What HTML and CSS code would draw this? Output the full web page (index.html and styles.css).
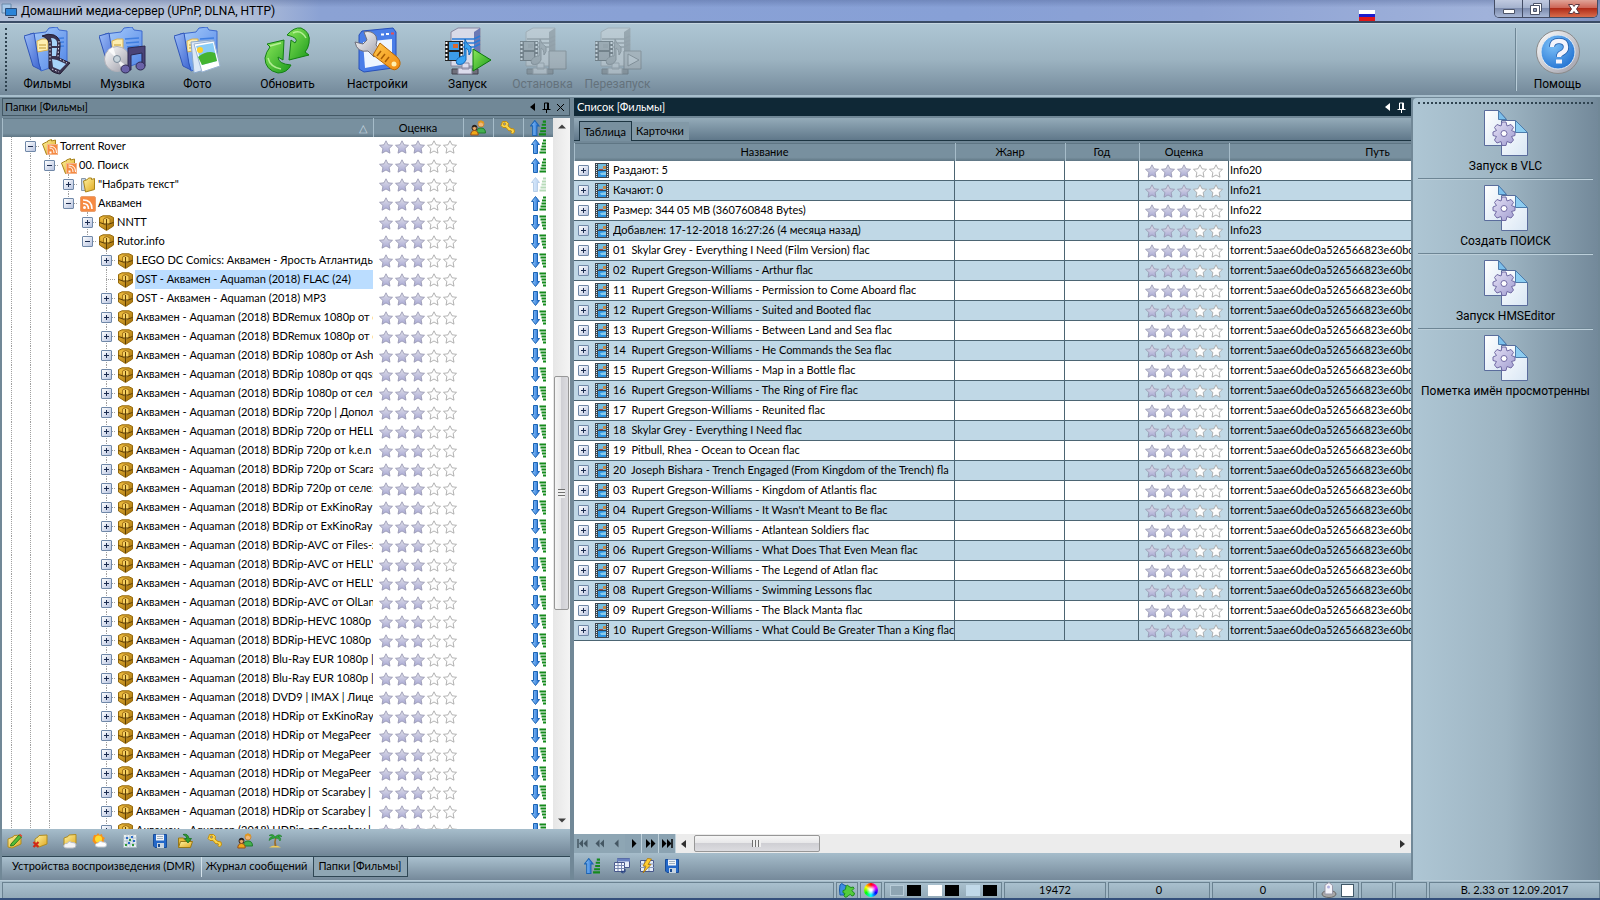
FILE: index.html
```html
<!DOCTYPE html>
<html lang="ru">
<head>
    <meta charset="UTF-8">
    <meta name="viewport" content="width=device-width, initial-scale=1.0">
    <title>Домашний медиа-сервер (UPnP, DLNA, HTTP)</title>
    <link rel="stylesheet" href="styles.css">
</head>
<body>
    <svg class="sprite" aria-hidden="true">
        <defs>
            <linearGradient id="g-folder" x1="0" y1="0" x2="1" y2="1"><stop offset="0" stop-color="#a9cdfb"/><stop offset="1" stop-color="#4f84e6"/></linearGradient>
            <linearGradient id="g-front" x1="0" y1="0" x2="1" y2="1"><stop offset="0" stop-color="#9dbef8"/><stop offset="1" stop-color="#3a62cf"/></linearGradient>
            <linearGradient id="g-green" x1="0" y1="0" x2="1" y2="1"><stop offset="0" stop-color="#8be85a"/><stop offset="1" stop-color="#1c9a1c"/></linearGradient>
            <linearGradient id="g-blue" x1="0" y1="0" x2="1" y2="0"><stop offset="0" stop-color="#9bd0ff"/><stop offset="1" stop-color="#1766d0"/></linearGradient>
            <linearGradient id="g-orange" x1="0" y1="0" x2="1" y2="1"><stop offset="0" stop-color="#ffc84a"/><stop offset="1" stop-color="#f08a10"/></linearGradient>
            <linearGradient id="g-silver" x1="0" y1="0" x2="1" y2="1"><stop offset="0" stop-color="#ffffff"/><stop offset="1" stop-color="#9a9aa6"/></linearGradient>
            <linearGradient id="g-star" x1="0" y1="0" x2="0" y2="1"><stop offset="0" stop-color="#e2e2ea"/><stop offset="1" stop-color="#a8a8d4"/></linearGradient>
            <linearGradient id="g-gear" x1="0" y1="0" x2="1" y2="1"><stop offset="0" stop-color="#e6e2f6"/><stop offset="1" stop-color="#a09cd0"/></linearGradient>
            <linearGradient id="g-page" x1="0" y1="0" x2="1" y2="1"><stop offset="0" stop-color="#ffffff"/><stop offset="1" stop-color="#d8e6f4"/></linearGradient>
            <linearGradient id="g-yellow" x1="0" y1="0" x2="1" y2="1"><stop offset="0" stop-color="#fff3a0"/><stop offset="1" stop-color="#e0a820"/></linearGradient>
            <linearGradient id="g-gold" x1="0" y1="0" x2="1" y2="1"><stop offset="0" stop-color="#f0bc3c"/><stop offset="1" stop-color="#9c6a08"/></linearGradient>
            <radialGradient id="g-help" cx=".35" cy=".3" r=".8"><stop offset="0" stop-color="#7cc0f8"/><stop offset="1" stop-color="#1f6fd0"/></radialGradient>
        </defs>

        <symbol id="folder" viewBox="0 0 48 48">
            <path d="M6 7l16-2 3-4 8-1 2 3 8 1v31l-26 9z" fill="url(#g-folder)" stroke="#3c68cc"/>
            <path d="M13 14l5-2 6 0v11l-11 2z" fill="#fdeeb0" stroke="#d8b050"/>
            <path d="M15 18h7M15 21h7" stroke="#c09830"/>
            <path d="M26 12l14-1M27 16l13-1M28 20l12-1" stroke="#3f7ee0" stroke-width="1.5"/>
            <path d="M0 9l10-3 5 31 2 6-8-4z" fill="url(#g-front)" stroke="#2f55b8"/>
        </symbol>
        <symbol id="films" viewBox="0 0 48 48">
            <use href="#folder"/>
            <path d="M18 9q6-3 12-1 7 3 6 12l-1 11 11 5-10 11q-8-1-11-6V16q-1-5-7-7z" fill="#3a3450" stroke="#241e34"/>
            <path d="M27 11q5 0 6 4v4h-5v-4zM28 21h5l-1 8h-4zM28 32l5 1 9 4-6 6-7-3z" fill="#a7d4fa"/>
            <path d="M26 15v20M35 14l-1 16M36 32l7 4M28 42l7 3" stroke="#e8e4f4" stroke-dasharray="1.5 2"/>
        </symbol>
        <symbol id="music" viewBox="0 0 48 48">
            <use href="#folder"/>
            <circle cx="18" cy="32" r="12.5" fill="url(#g-silver)" stroke="#b0b0b8"/>
            <path d="M18 32L9 23l5-3zM18 32l10 7-4 5z" fill="#fff" opacity=".8"/>
            <circle cx="18" cy="32" r="3.5" fill="#c8d4dc" stroke="#788898"/>
            <path d="M29 21l17-2v20h-3V26l-11 2v15h-3z" fill="#4a4478" stroke="#2c2850"/>
            <ellipse cx="26.500" cy="42" rx="4.500" ry="4" fill="#6a62a8" stroke="#2c2850"/>
            <ellipse cx="41.500" cy="39" rx="4.500" ry="4" fill="#6a62a8" stroke="#2c2850"/>
        </symbol>
        <symbol id="photo" viewBox="0 0 48 48">
            <use href="#folder"/>
            <path d="M17 15l22-2-2 28-17 5z" fill="#dce8f6" stroke="#8aa8cc"/>
            <path d="M20 17l20-3 6 25-18 6z" fill="#fff" stroke="#9ab4d4"/>
            <path d="M22 19l17-3 4 18-15 4z" fill="#8accf6"/>
            <path d="M24 30q9-7 17-4l2 8-15 4z" fill="#44b430"/>
            <circle cx="26" cy="23" r="3" fill="#ffd028"/>
        </symbol>
        <symbol id="refresh" viewBox="0 0 48 48">
            <path d="M3 17l17-4-1 20-5-3q0 7 13 8-4 8-13 8Q1 43 1 31q1-6 5-11z" fill="url(#g-green)" stroke="#138013" stroke-linejoin="round"/>
            <path d="M25 33l2-20 4 3q5-5-8-8 7-8 14-7 10 4 8 15-1 6-4 9l4 3z" fill="url(#g-green)" stroke="#138013" stroke-linejoin="round"/>
            <path d="M6 19l11-3M4 31q2 9 13 11M29 6q8-4 13 5" fill="none" stroke="#c8f8a8" stroke-width="1.5" opacity=".8"/>
        </symbol>
        <symbol id="settings" viewBox="0 0 48 48">
            <path d="M5 8l3-4 31-3 3 4v33l-3 3-29 4-5-3z" fill="#4a7ee8" stroke="#2850b8"/>
            <path d="M9 15l29-3v24L11 41z" fill="#eef6ff"/>
            <path d="M27 7.500h3M32 7h3" stroke="#fff" stroke-width="2"/><path d="M37 6.500h3" stroke="#e85050" stroke-width="2"/>
            <path d="M1 15l8 2 4-4-3-8q8-2 12 4 2 5 0 9l5 6-7 6-6-6Q3 26 1 15z" fill="url(#g-silver)" stroke="#70707c"/>
            <path d="M26 16l17 14q5 5 2 10-4 5-9 1L19 28z" fill="url(#g-orange)" stroke="#b86808"/>
            <path d="M27 24l-4 5M31 27l-4 5M35 30l-4 5" stroke="#a85c04" stroke-width="1.500"/><circle cx="40" cy="37" r="2.500" fill="#fff0b0"/>
        </symbol>
        <symbol id="server" viewBox="0 0 48 48">
            <path d="M7 5l7-4h22v33l-5 5H7z" fill="#d8dae8" stroke="#8888a0"/>
            <path d="M30 5l6-4v33l-6 5z" fill="#6a78b4"/>
            <path d="M8 12h22l6-3M8 16h22l6-3M8 20h22l6-3" fill="none" stroke="#2a7cd8" stroke-width="1.500"/>
            <path d="M8 42h26v5H8z" fill="#70707c" stroke="#40404c"/><path d="M14 41h14v6H14zM18 36h7v6h-7z" fill="#dcdcec" stroke="#8888a0"/>
            <path d="M1 14h18v20H1z" fill="#222"/>
            <path d="M2.500 15v18M17.500 15v18" stroke="#fff" stroke-width="2" stroke-dasharray="2 2"/>
            <path d="M5 15h10v8H5zM5 25h10v8H5z" fill="#3c9ce8"/>
            <path d="M9 17h5v4H9z" fill="#d86830"/>
            <path d="M21 12q1 5 6 8 1 5-2 8 0-6-3-7v12q-3 6-9 4-3-5 5-8h2z" fill="#38a4f4" stroke="#1468b8"/>
        </symbol>
        <symbol id="start" viewBox="0 0 48 48">
            <use href="#server"/>
            <path d="M29 22l18 11-18 11z" fill="url(#g-green)" stroke="#0c780c" stroke-linejoin="round"/>
        </symbol>
        <symbol id="stop" viewBox="0 0 48 48">
            <use href="#server"/><path d="M30 24h17v18H30z" fill="#b0b0b0" stroke="#555"/>
        </symbol>
        <symbol id="restart" viewBox="0 0 48 48">
            <use href="#server"/><path d="M30 24h17v18H30z" fill="#b0b0b0" stroke="#555"/><path d="M34 27l11 6-11 6z" fill="#ddd" stroke="#555"/>
        </symbol>
        <symbol id="help" viewBox="0 0 48 48">
            <circle cx="24" cy="25" r="21.500" fill="url(#g-silver)" stroke="#8a8a8a"/>
            <circle cx="24" cy="25" r="17" fill="url(#g-help)" stroke="#e4ecf4"/>
            <path d="M18 20q0-6 7-6t7 6q0 4-4 6-3 1-3 4" fill="none" stroke="#1c58a8" stroke-width="6"/>
            <path d="M18 20q0-6 7-6t7 6q0 4-4 6-3 1-3 4" fill="none" stroke="#f4f4fc" stroke-width="4.500"/>
            <path d="M22 32.500h6v4h-6z" fill="#f4f4fc"/>
        </symbol>
        <symbol id="script" viewBox="0 0 44 46">
            <path d="M.5.500h14l8 9v26H.5z" fill="url(#g-page)" stroke="#5a6c9c"/>
            <path d="M14.500.500v9h8z" fill="#7cc0ec" stroke="#4c7cac"/>
            <path d="M17.500 10.500h14l12 12v23h-26z" fill="url(#g-page)" stroke="#5a6c9c"/>
            <path d="M31.500 10.500v12h12z" fill="#8cccf0" stroke="#4c7cac"/>
            <path d="M18 12l4 0 1 4 4-1.500 2.500 3-2 3 3.500 1.500v3.500l-3.500 1 2 3.500-2.500 3-4-1.500-1 4h-4l-1-4-4 1.500-2.500-3 2-3.500-3.500-1V22l3.500-1.500-2-3 2.500-3 4 1.500z" fill="url(#g-gear)" stroke="#716aa4"/>
            <circle cx="20" cy="23.500" r="3" fill="#fff" stroke="#716aa4"/>
        </symbol>

        <symbol id="app" viewBox="0 0 16 16">
            <path d="M1 1h9v9H1z" fill="#a8c8e8" stroke="#6888a8"/><path d="M4.500 5.500h11v7h-11z" fill="#2c84d8" stroke="#2a4c78"/><path d="M7 14.500h6" stroke="#445"/>
        </symbol>
        <symbol id="star" viewBox="0 0 14 14">
            <path d="M7 .8l2 4 4.500.5-3.400 3.200.9 4.700L7 11l-4 2.200.9-4.700L.5 5.300 5 4.800z" fill="url(#g-star)" stroke="#9494ae" stroke-width=".8"/>
        </symbol>
        <symbol id="star-empty" viewBox="0 0 14 14">
            <path d="M7 .8l2 4 4.500.5-3.400 3.200.9 4.700L7 11l-4 2.200.9-4.700L.5 5.300 5 4.800z" fill="#fdfdfd" stroke="#a0a0a0" stroke-width=".8"/>
        </symbol>
        <symbol id="sort-up" viewBox="0 0 15 15">
            <path d="M4.500.5l4 5H6.500v9h-4v-9H.5z" fill="url(#g-blue)" stroke="#1c64b4"/>
            <path d="M12 1.500h3M11 4.500h4M10.500 7.500H15M9.500 10.500H15M8.500 13.500H15" stroke="#148a1c" stroke-width="2"/>
        </symbol>
        <symbol id="sort-down" viewBox="0 0 15 15">
            <path d="M4.500 14.500l4-5H6.500v-9h-4v9H.5z" fill="url(#g-blue)" stroke="#1c64b4"/>
            <path d="M8.500 1.500H15M9.500 4.500H15M10.500 7.500H15M11 10.500h4M12 13.500h3" stroke="#148a1c" stroke-width="2"/>
        </symbol>
        <symbol id="box" viewBox="0 0 16 16">
            <path d="M.5 2.500L4 .8h7l3.500 1.700v8.500L7.500 15.500.5 11z" fill="url(#g-gold)" stroke="#94680c"/>
            <path d="M2 3l3-1v5L2 6z" fill="#e8b83c"/>
            <path d="M4.500 4L8 2.500l3 1.500v5L8 10.500 4.500 9z" fill="#f6d060" stroke="#a4741c"/>
            <path d="M.5 7.500L5 9h5l4.500-1.500M7.500 4v11" fill="none" stroke="#5c3e04"/>
        </symbol>
        <symbol id="rss" viewBox="0 0 16 16">
            <rect x=".5" y=".5" width="15" height="15" rx="1.500" fill="#f68a42" stroke="#e8a070"/>
            <circle cx="4.500" cy="11.500" r="1.500" fill="#fff"/>
            <path d="M3 7.500q5.500 0 5.500 5.500M3 4q9 0 9 9" fill="none" stroke="#fff" stroke-width="1.600"/>
        </symbol>
        <symbol id="rss-folder" viewBox="0 0 16 16">
            <path d="M.5 5l4-2 1 0V2l4-1.500V2l4-1v11l-9 3.500z" fill="url(#g-yellow)" stroke="#a8841c"/>
            <rect x="5.500" y="5.500" width="10" height="10" fill="#f68a42" stroke="#f4b48a"/>
            <path d="M7.500 9q4.500 0 4.500 5M7.500 7q7 0 7 7" fill="none" stroke="#fff"/><path d="M7.500 12.500h2v2h-2z" fill="#fff"/>
        </symbol>
        <symbol id="search-folder" viewBox="0 0 16 16">
            <path d="M1.500 1.500h4v12h-4z" fill="#c4d4e8" stroke="#8898a8"/>
            <path d="M3.500 4l4-1.500 1-1.500 3 0v1.500l3-1v11l-9 2.500z" fill="url(#g-yellow)" stroke="#a8841c"/>
        </symbol>
        <symbol id="film" viewBox="0 0 14 15">
            <path d="M0 0h14v15H0z" fill="#3c4650"/>
            <path d="M1.500 1v14M12.500 1v14" stroke="#e4ecf0" stroke-dasharray="1 1"/>
            <path d="M3 1h8v6H3z" fill="#74bcdc"/><path d="M3 8h8v6H3z" fill="#2c94e0"/>
            <path d="M8 3h3v3H8z" fill="#c88a48"/><path d="M4 6h4v1H4z" fill="#b04848"/><path d="M5 10l6-1v3H6z" fill="#88ccec"/>
        </symbol>

        <symbol id="edit-folder" viewBox="0 0 16 16">
            <path d="M1 6l5-2 1-1.500L14 2v9l-9 4-4-1z" fill="url(#g-yellow)" stroke="#b08c20"/><path d="M4 11l8-9 2.500 2-8 8.500L3.500 13z" fill="#54bc38" stroke="#2a7c20"/><path d="M12 2l2.500 2 .8-1.200L13 .8z" fill="#e04838"/>
        </symbol>
        <symbol id="delete-folder" viewBox="0 0 16 16">
            <path d="M3 6l3-2 1-1.500L15 2v9l-8 3-4-1z" fill="url(#g-yellow)" stroke="#b08c20"/><path d="M1.500 9l5 5M6.500 9l-5 5" stroke="#d02818" stroke-width="2.200"/>
        </symbol>
        <symbol id="cloud-folder" viewBox="0 0 16 16">
            <path d="M2 5l4-1.500L7 2l7-.5v9l-8 3-4-1z" fill="url(#g-yellow)" stroke="#b08c20"/><path d="M5 15q-4 0-3-3 1-2 3-1.500 2-3.500 5-1 4-.5 4 2.500t-3 3z" fill="#f4f4f4" stroke="#b8bcc4"/>
        </symbol>
        <symbol id="sun" viewBox="0 0 16 16">
            <path d="M6 0l1.500 2L10 1l.5 2.500L13 5l-1.500 2 1 3L3 11 .5 8 1 5l1-3 2.500 0z" fill="#f89018"/><circle cx="6.500" cy="6" r="3.500" fill="#ffdc30"/><path d="M6 14q-3 0-2.500-2.500Q4.500 9.500 6 10q2-3 4.500-1 4-.5 4 2.500T12 14z" fill="#fff" stroke="#c0c8d0"/>
        </symbol>
        <symbol id="grid" viewBox="0 0 16 16">
            <path d="M1.500 1.500h13v13h-13z" fill="#e8f0f4" stroke="#a8b8c0"/><path d="M5 1v14M8 1v14M11 1v14M1 5h14M1 8h14M1 11h14" stroke="#b4c4d0"/><path d="M4 4h2v2H4zM9 3h2v2H9zM6 9h2v2H6zM11 7h2v2h-2z" fill="#2c6cc8"/><path d="M7 6h2v2H7zM3 11h2v2H3zM10 11h2v2h-2z" fill="#309c38"/>
        </symbol>
        <symbol id="save" viewBox="0 0 16 16">
            <path d="M1.500 1.500h13v13H3l-1.500-1.500z" fill="#2468c8" stroke="#184c98"/><path d="M4 1.500h8v6H4z" fill="#f0f4f8"/><path d="M5 3.500h6M5 5.500h6" stroke="#a0b0c0"/><path d="M5 10h7v5H5z" fill="#c8d4e0"/><path d="M6 11h2v3H6z" fill="#1c4c90"/>
        </symbol>
        <symbol id="open" viewBox="0 0 16 16">
            <path d="M1.500 14V5h5l1 2h6v7z" fill="#e8bc38" stroke="#987818"/><path d="M1.500 14.500l2-6h12l-2 6z" fill="url(#g-yellow)" stroke="#987818"/><path d="M6 1.500q5-1.500 6 4h2.500L11 10 7.500 5.500H10Q9.500 2.500 6 1.500z" fill="#2ca030" stroke="#187020" stroke-width=".8"/>
        </symbol>
        <symbol id="key" viewBox="0 0 16 16">
            <path d="M2.500 1.500h4l2 2-.5 2.500 3 2.500 3 .5.500 3-2 2-1.500-1.500.5-1.500-1.500-.5-1 .5-3-3.500-3 0-2-2z" fill="#fcd648" stroke="#c08c10" stroke-linejoin="round"/><circle cx="4.500" cy="4" r="1.300" fill="#8c9ca4" stroke="#b88410" stroke-width=".6"/>
        </symbol>
        <symbol id="users" viewBox="0 0 16 16">
            <circle cx="11" cy="4" r="3" fill="#f0b878" stroke="#c88838"/><path d="M6.500 13q0-5 4.500-5t4.500 5z" fill="#44b050" stroke="#207c2c"/><path d="M8.500 3q2-3 5 0" stroke="#e09820" stroke-width="2" fill="none"/><circle cx="4.500" cy="8" r="2.500" fill="#e8a868" stroke="#33241c"/><path d="M2.500 7q2-2.500 4 0" stroke="#28201c" stroke-width="2" fill="none"/><path d="M.8 15q0-4.500 3.700-4.500T8.200 15z" fill="#f0a818" stroke="#98501c"/>
        </symbol>
        <symbol id="palm" viewBox="0 0 16 16">
            <path d="M2 14.500q6-4 12 0z" fill="#f0cc58"/><path d="M8 5l1.500 0q-1.500 4 0 8h-2q-1-4 .5-8z" fill="#9c6c28"/><path d="M8 4Q6 0 2 2.500q3 0 3.500 1.500Q2 4 2 7.500 5 5 8 5q4-.5 5 3 2-3.500-2-4.500 2-.5 4 0Q12 0 8 4z" fill="#30a838" stroke="#1c7c28" stroke-width=".6"/>
        </symbol>
        <symbol id="columns" viewBox="0 0 16 16">
            <path d="M3.500.5h12v9h-12z" fill="#e4ecf8" stroke="#48588c"/><path d="M3 2h13" stroke="#6880c0" stroke-width="3"/><path d="M.5 4.500h10v9H.5z" fill="#f4f8ff" stroke="#48588c"/><path d="M.5 7.500h10M.5 10.500h10M4 5v8M7.500 5v8" stroke="#7888b0"/><path d="M11 11v3H7.500M9 12.500L7.500 14 9 15.500" fill="none" stroke="#203c80"/>
        </symbol>
        <symbol id="flash" viewBox="0 0 16 16">
            <path d="M1.500 2.500h13v11h-13z" fill="#e4ecf8" stroke="#48588c"/><path d="M1 6h14M1 9.500h14M5.500 3v10M10 3v10" stroke="#8898b8"/><path d="M8.500.5L4 8h3l-3 7 8-8.500H9L12.500 1z" fill="#ffcc30" stroke="#a87408" stroke-width=".8"/>
        </symbol>
        <symbol id="puzzle" viewBox="0 0 16 16">
            <path d="M1 3q1.500-3 4 0 3 0 2.500 3v7H1q-1-5 0-10z" fill="#3c8ce0" stroke="#1c5ca8"/><path d="M7 4.500q1-3 3 0l2 1q3-1.500 3 1-1 1-2 2 1 2 2.500 2.500 0 3-2.500 3-2-3-3.500-.5Q6 17 5 13.500l1-2q-3 0-2-3 2 0 2.500-1.500z" fill="#54cc3c" stroke="#1c8c1c"/>
        </symbol>
        <symbol id="satellite" viewBox="0 0 16 16">
            <ellipse cx="8" cy="12" rx="7" ry="3.500" fill="#a8a8a8" stroke="#686868"/><path d="M4 12V3l4-2.500 3.500 3V12z" fill="#f4f4fa" stroke="#9898a8"/><circle cx="7.500" cy="5" r="1.500" fill="#b0b0e0"/>
        </symbol>
        <symbol id="pin" viewBox="0 0 9 11"><path d="M2.500 7V1h4v6M5.500 1v6M.5 7.500h8M4.500 8v3" fill="none" stroke="currentColor"/></symbol>
        <symbol id="cross" viewBox="0 0 9 9"><path d="M1 1l7 7M8 1L1 8" stroke="currentColor"/></symbol>
        <symbol id="tri-left" viewBox="0 0 5 8"><path d="M5 0v8L0 4z" fill="currentColor"/></symbol>
        <symbol id="tri-right" viewBox="0 0 5 8"><path d="M0 0v8l5-4z" fill="currentColor"/></symbol>
        <symbol id="tri-up" viewBox="0 0 8 5"><path d="M0 4.500h8L4 .5z" fill="currentColor"/></symbol>
        <symbol id="tri-down" viewBox="0 0 8 5"><path d="M0 .5h8L4 4.500z" fill="currentColor"/></symbol>
        <symbol id="nav-first" viewBox="0 0 11 9"><path d="M1 0v9" stroke="currentColor" stroke-width="1.500"/><path d="M6 .5v8l-4-4zM10.500.5v8l-4-4z" fill="currentColor"/></symbol>
        <symbol id="nav-back" viewBox="0 0 11 9"><path d="M5.500.5v8l-4-4zM10 .5v8l-4-4z" fill="currentColor"/></symbol>
        <symbol id="nav-prev" viewBox="0 0 11 9"><path d="M7.500.5v8l-4-4z" fill="currentColor"/></symbol>
        <symbol id="nav-next" viewBox="0 0 11 9"><path d="M4 0v9l4.500-4.500z" fill="currentColor"/></symbol>
        <symbol id="nav-forward" viewBox="0 0 11 9"><path d="M1 0v9l4.500-4.500zM6 0v9l4.500-4.500z" fill="currentColor"/></symbol>
        <symbol id="nav-last" viewBox="0 0 11 9"><path d="M10 0v9" stroke="currentColor" stroke-width="1.500"/><path d="M0 0v9l4.500-4.500zM5 0v9l4.500-4.500z" fill="currentColor"/></symbol>
        <symbol id="minimize" viewBox="0 0 14 14"><path d="M1.500 7.500h11v4h-11z" fill="#fff" stroke="#4c5468"/></symbol>
        <symbol id="restore" viewBox="0 0 14 14"><path d="M4.500 1.500h8v8h-8z" fill="#fff" stroke="#4c5468"/><path d="M1.500 3.500h9v9h-9z" fill="#fff" stroke="#4c5468"/><path d="M4.500 6.500h3v3h-3z" fill="#8c98b4" stroke="#4c5468"/></symbol>
        <symbol id="close" viewBox="0 0 14 14"><path d="M1.500 2.500h4L7 4.500l1.500-2h4L9.500 7l3 4.500h-4L7 9.500l-1.500 2h-4l3-4.500z" fill="#fff" stroke="#5c3840"/></symbol>
    </svg>

    <header class="title-bar">
        <svg class="icon"><use href="#app"/></svg>
        <h1>Домашний медиа-сервер (UPnP, DLNA, HTTP)</h1>
        <span class="flag"></span>
        <div class="window-buttons">
            <button aria-label="Свернуть"><svg><use href="#minimize"/></svg></button>
            <button class="restore" aria-label="Восстановить"><svg><use href="#restore"/></svg></button>
            <button class="close" aria-label="Закрыть"><svg><use href="#close"/></svg></button>
        </div>
    </header>

    <nav class="toolbar">
        <div class="group">
            <button><svg><use href="#films"/></svg>Фильмы</button>
            <button><svg><use href="#music"/></svg>Музыка</button>
            <button><svg><use href="#photo"/></svg>Фото</button>
        </div>
        <button><svg><use href="#refresh"/></svg>Обновить</button>
        <button><svg><use href="#settings"/></svg>Настройки</button>
        <div class="group">
            <button><svg><use href="#start"/></svg>Запуск</button>
            <button disabled><svg><use href="#stop"/></svg>Остановка</button>
            <button disabled><svg><use href="#restart"/></svg>Перезапуск</button>
        </div>
        <div class="help"><button><svg><use href="#help"/></svg>Помощь</button></div>
    </nav>

    <main class="workspace">
        <section class="folders">
            <div class="panel-title">
                <h2>Папки [Фильмы]</h2>
                <button aria-label="Назад"><svg class="tri"><use href="#tri-left"/></svg></button>
                <button aria-label="Закрепить"><svg class="pin"><use href="#pin"/></svg></button>
                <button aria-label="Закрыть"><svg class="cross"><use href="#cross"/></svg></button>
            </div>
            <div class="tree">
                <div class="tree-view">
                    <table class="tree-table">
                        <colgroup><col><col class="w-rate"><col class="w-mark"><col class="w-mark"><col class="w-mark"></colgroup>
                        <thead>
                            <tr>
                                <th aria-label="Название"><span class="sort-mark">△</span></th>
                                <th>Оценка</th>
                                <th aria-label="Пользователи"><svg class="icon"><use href="#users"/></svg></th>
                                <th aria-label="Доступ"><svg class="icon"><use href="#key"/></svg></th>
                                <th aria-label="Сортировка"><svg class="icon"><use href="#sort-up"/></svg></th>
                            </tr>
                        </thead>
                        <tbody id="tree-rows"></tbody>
                    </table>
                </div>
                <div class="scroll-v">
                    <svg class="tri-v"><use href="#tri-up"/></svg>
                    <div class="track-v"><span class="space-top"></span><span class="thumb-v"><i></i></span><span class="space-bottom"></span></div>
                    <svg class="tri-v"><use href="#tri-down"/></svg>
                </div>
            </div>
            <div class="small-tools">
                <div class="group">
                    <button aria-label="Изменить папку"><svg class="icon"><use href="#edit-folder"/></svg></button>
                    <button aria-label="Удалить папку"><svg class="icon"><use href="#delete-folder"/></svg></button>
                </div>
                <button aria-label="Скрыть папку"><svg class="icon"><use href="#cloud-folder"/></svg></button>
                <button aria-label="Погода"><svg class="icon"><use href="#sun"/></svg></button>
                <button aria-label="Сетка"><svg class="icon"><use href="#grid"/></svg></button>
                <div class="group">
                    <button aria-label="Сохранить"><svg class="icon"><use href="#save"/></svg></button>
                    <button aria-label="Загрузить"><svg class="icon"><use href="#open"/></svg></button>
                </div>
                <button aria-label="Доступ"><svg class="icon"><use href="#key"/></svg></button>
                <button aria-label="Пользователи"><svg class="icon"><use href="#users"/></svg></button>
                <button aria-label="Остров"><svg class="icon"><use href="#palm"/></svg></button>
            </div>
            <div class="bottom-tabs">
                <button>Устройства воспроизведения (DMR)</button>
                <button>Журнал сообщений</button>
                <button class="active">Папки [Фильмы]</button>
            </div>
        </section>

        <section class="list">
            <div class="panel-title dark">
                <h2>Список [Фильмы]</h2>
                <button aria-label="Назад"><svg class="tri"><use href="#tri-left"/></svg></button>
                <button aria-label="Закрепить"><svg class="pin"><use href="#pin"/></svg></button>
            </div>
            <div class="view-tabs">
                <button class="active">Таблица</button>
                <button>Карточки</button>
            </div>
            <div class="grid-view">
                <table class="grid-table">
                    <colgroup><col><col class="w-genre"><col class="w-year"><col class="w-score"><col class="w-path"></colgroup>
                    <thead>
                        <tr><th>Название</th><th>Жанр</th><th>Год</th><th>Оценка</th><th>Путь</th></tr>
                    </thead>
                    <tbody id="list-rows"></tbody>
                </table>
            </div>
            <div class="scroll-h">
                <div class="navigator">
                    <button disabled aria-label="Первая"><svg><use href="#nav-first"/></svg></button>
                    <button disabled aria-label="Страница назад"><svg><use href="#nav-back"/></svg></button>
                    <button disabled aria-label="Предыдущая"><svg><use href="#nav-prev"/></svg></button>
                    <button aria-label="Следующая"><svg><use href="#nav-next"/></svg></button>
                    <button aria-label="Страница вперёд"><svg><use href="#nav-forward"/></svg></button>
                    <button aria-label="Последняя"><svg><use href="#nav-last"/></svg></button>
                </div>
                <svg class="tri"><use href="#tri-left"/></svg>
                <div class="track-h"><span class="thumb-h"><i></i></span></div>
                <svg class="tri"><use href="#tri-right"/></svg>
            </div>
            <div class="small-tools list-tools">
                <button aria-label="Сортировка"><svg class="icon"><use href="#sort-up"/></svg></button>
                <div class="group">
                    <button aria-label="Столбцы"><svg class="icon"><use href="#columns"/></svg></button>
                    <button aria-label="Обновить"><svg class="icon"><use href="#flash"/></svg></button>
                    <button aria-label="Сохранить"><svg class="icon"><use href="#save"/></svg></button>
                </div>
            </div>
        </section>

        <aside class="scripts">
            <button><svg><use href="#script"/></svg>Запуск в VLC</button>
            <button><svg><use href="#script"/></svg>Создать ПОИСК</button>
            <button><svg><use href="#script"/></svg>Запуск HMSEditor</button>
            <button><svg><use href="#script"/></svg>Пометка имён просмотренны</button>
        </aside>
    </main>

    <footer class="status-bar">
        <span class="cell message"></span>
        <span class="cell tiny"><svg class="icon"><use href="#puzzle"/></svg></span>
        <span class="cell tiny"><i class="wheel"></i></span>
        <span class="cell swatches"><i class="grey"></i><i class="black"></i><i class="white"></i><i class="black"></i><i class="blue"></i><i class="black"></i></span>
        <span class="cell number">19472</span>
        <span class="cell number">0</span>
        <span class="cell number">0</span>
        <span class="cell device"><svg class="icon"><use href="#satellite"/></svg><input type="checkbox" aria-label="Устройство"></span>
        <span class="cell empty"></span>
        <span class="cell empty"></span>
        <span class="cell version">В. 2.33 от 12.09.2017</span>
    </footer>

    <script>
        // level, icon, name, expander, sort icon
        let folders = [
            [0, "rss-folder", "Torrent Rover", "-", "up"],
            [1, "rss-folder", "00. Поиск", "-", "up"],
            [2, "search-folder", "\"Набрать текст\"", "+", "faded"],
            [2, "rss", "Аквамен", "-", "up"],
            [3, "box", "NNTT", "+", "down"],
            [3, "box", "Rutor.info", "-", "down"],
            [4, "box", "LEGO DC Comics: Аквамен - Ярость Атлантиды", "+", "down"],
            [4, "box", "OST - Аквамен - Aquaman (2018) FLAC (24)", "", "down"],
            [4, "box", "OST - Аквамен - Aquaman (2018) MP3", "+", "down"]
        ];
        let releases = [
            "BDRemux 1080p от с", "BDRemux 1080p от с", "BDRip 1080p от AshO", "BDRip 1080p от qqss",
            "BDRip 1080p от селе", "BDRip 720p | Допол", "BDRip 720p от HELLY", "BDRip 720p от k.e.n",
            "BDRip 720p от Scara", "BDRip 720p от селез", "BDRip от ExKinoRay", "BDRip от ExKinoRay",
            "BDRip-AVC от Files-x", "BDRip-AVC от HELLY", "BDRip-AVC от HELLY", "BDRip-AVC от OlLanD",
            "BDRip-HEVC 1080p |", "BDRip-HEVC 1080p о", "Blu-Ray EUR 1080p |", "Blu-Ray EUR 1080p |",
            "DVD9 | IMAX | Лицен", "HDRip от ExKinoRay", "HDRip от MegaPeer", "HDRip от MegaPeer",
            "HDRip от MegaPeer", "HDRip от Scarabey |", "HDRip от Scarabey |", "HDRip от Scarabey |"
        ];
        for(let i = 0; i < releases.length; i++){
            folders.push([4, "box", "Аквамен - Aquaman (2018) " + releases[i], "+", "down"]);
        }
        let selected = 7;

        let torrent = "torrent:5aae60de0a526566823e60bc";
        let files = [
            ["Раздают: 5", "Info20"],
            ["Качают: 0", "Info21"],
            ["Размер: 344 05 MB (360760848 Bytes)", "Info22"],
            ["Добавлен: 17-12-2018 16:27:26 (4 месяца назад)", "Info23"],
            ["01  Skylar Grey - Everything I Need (Film Version) flac", torrent],
            ["02  Rupert Gregson-Williams - Arthur flac", torrent],
            ["11  Rupert Gregson-Williams - Permission to Come Aboard flac", torrent],
            ["12  Rupert Gregson-Williams - Suited and Booted flac", torrent],
            ["13  Rupert Gregson-Williams - Between Land and Sea flac", torrent],
            ["14  Rupert Gregson-Williams - He Commands the Sea flac", torrent],
            ["15  Rupert Gregson-Williams - Map in a Bottle flac", torrent],
            ["16  Rupert Gregson-Williams - The Ring of Fire flac", torrent],
            ["17  Rupert Gregson-Williams - Reunited flac", torrent],
            ["18  Skylar Grey - Everything I Need flac", torrent],
            ["19  Pitbull, Rhea - Ocean to Ocean flac", torrent],
            ["20  Joseph Bishara - Trench Engaged (From Kingdom of the Trench) fla", torrent],
            ["03  Rupert Gregson-Williams - Kingdom of Atlantis flac", torrent],
            ["04  Rupert Gregson-Williams - It Wasn't Meant to Be flac", torrent],
            ["05  Rupert Gregson-Williams - Atlantean Soldiers flac", torrent],
            ["06  Rupert Gregson-Williams - What Does That Even Mean flac", torrent],
            ["07  Rupert Gregson-Williams - The Legend of Atlan flac", torrent],
            ["08  Rupert Gregson-Williams - Swimming Lessons flac", torrent],
            ["09  Rupert Gregson-Williams - The Black Manta flac", torrent],
            ["10  Rupert Gregson-Williams - What Could Be Greater Than a King flac", torrent]
        ];

        function stars(){
            let text = "";
            for(let i = 0; i < 5; i++){
                text += `<svg><use href="#${i < 3 ? "star" : "star-empty"}"/></svg>`;
            }
            return `<div class="stars">${text}</div>`;
        }

        function expander(sign){
            let label = sign == "+" ? "Развернуть" : "Свернуть";
            return `<button class="expander ${sign == "+" ? "plus" : ""}" aria-label="${label}"></button>`;
        }

        function guides(level){
            let text = "";
            for(let i = 0; i <= level; i++){
                text += `<span class="guide ${i < 3 ? "line" : ""}"></span>`;
            }
            return text;
        }

        function renderTree(){
            let text = "";
            for(let i = 0; i < folders.length; i++){
                let [level, icon, name, sign, sort] = folders[i];
                let last = level > 1 && folders[i + 1] && folders[i + 1][0] > level;
                text +=
                `
                    <tr>
                        <td>
                            <div class="node ${i == selected ? "selected" : ""}">
                                ${guides(level)}
                                <span class="guide joint ${last ? "last" : ""}">${sign ? expander(sign) : ""}</span>
                                <span class="node-icon ${sign == "-" ? "open" : ""}"><svg class="icon"><use href="#${icon}"/></svg></span>
                                <span class="node-name">${name}</span>
                            </div>
                        </td>
                        <td>${stars()}</td>
                        <td></td>
                        <td></td>
                        <td><svg class="sort ${sort}"><use href="#sort-${sort == "down" ? "down" : "up"}"/></svg></td>
                    </tr>
                `
            }
            document.getElementById("tree-rows").innerHTML = text;
        }

        function renderList(){
            let text = "";
            for(let i = 0; i < files.length; i++){
                text +=
                `
                    <tr>
                        <td>
                            <div class="file">${expander("+")}<svg class="film"><use href="#film"/></svg><span>${files[i][0]}</span></div>
                        </td>
                        <td></td>
                        <td></td>
                        <td>${stars()}</td>
                        <td>${files[i][1]}</td>
                    </tr>
                `
            }
            document.getElementById("list-rows").innerHTML = text;
        }

        renderTree();
        renderList();
    </script>
</body>
</html>
```
FILE: styles.css
```css
*{
    margin: 0;
    padding: 0;
    box-sizing: border-box;
}

body{
    height: 100vh;
    display: flex;
    flex-direction: column;
    overflow: hidden;
    background: #718897;
    color: #000;
    font-family: "Lato", "Liberation Sans", sans-serif;
    font-size: 11px;
    line-height: 16px;
}

button{
    border: none;
    background: none;
    font: inherit;
    color: inherit;
}

.sprite{
    position: absolute;
    width: 0;
    height: 0;
}

.icon{
    width: 16px;
    height: 16px;
    flex: none;
}

.group{
    display: flex;
}

/* title bar */
.title-bar{
    flex: none;
    height: 23px;
    display: flex;
    align-items: center;
    gap: 4px;
    padding-left: 1px;
    border-bottom: 2px solid #3a4c66;
    background: linear-gradient(to bottom, rgba(70, 90, 140, 0.35), rgba(255, 255, 255, 0) 35%), linear-gradient(to right, #b3c0d8, #b3c0d8 15%, #8ba2d4 20%, #87a0d6 60%, #8da2d4 75%, #a0b2da 93%, #7f93c0);
}

.title-bar h1{
    font-family: "Roboto", sans-serif;
    font-size: 12px;
    font-weight: 400;
    flex: 1;
    white-space: nowrap;
}

.flag{
    align-self: flex-end;
    width: 16px;
    height: 11px;
    margin-right: 115px;
    background: linear-gradient(to bottom, #fff 4px, #1c1ccc 4px, #1c1ccc 7px, #e01818 7px);
}

.window-buttons{
    align-self: flex-start;
    display: flex;
    height: 18px;
    margin-right: 2px;
    border: 1px solid #434c64;
    border-top: none;
    border-radius: 0 0 5px 5px;
    overflow: hidden;
}

.window-buttons button{
    width: 28px;
    border-right: 1px solid #434c64;
    background: linear-gradient(to bottom, #c0cae0, #a2b0cc 50%, #7d8cae 50%, #a9b8d6);
}

.window-buttons .restore{
    width: 27px;
}

.window-buttons .close{
    width: 47px;
    border-right: none;
    background: linear-gradient(to bottom, #e0a498, #cc6050 50%, #b02c18 50%, #d86c4c);
}

.window-buttons svg{
    display: block;
    width: 14px;
    height: 14px;
    margin: 0 auto;
}

/* main toolbar */
.toolbar{
    flex: none;
    height: 74px;
    display: flex;
    gap: 15px;
    padding-left: 10px;
    border-top: 1px solid #c5d6e0;
    border-bottom: 2px solid #a8bfcd;
    background: linear-gradient(to bottom, #aec6d4, #9cb3c1 50%, #73899a);
    font-family: "Roboto", sans-serif;
    font-size: 12px;
    position: relative;
}

.toolbar::before{
    content: "";
    position: absolute;
    left: 5px;
    top: 4px;
    bottom: 4px;
    border-left: 2px dotted #2f4350;
}

.toolbar button{
    width: 75px;
    display: flex;
    flex-direction: column;
    align-items: center;
    gap: 1px;
    padding-top: 3px;
    white-space: nowrap;
}

.toolbar svg{
    flex: none;
    width: 48px;
    height: 48px;
}

.toolbar button:disabled{
    color: #64727c;
}

.toolbar button:disabled svg{
    filter: grayscale(1);
    opacity: 0.35;
}

.help{
    margin: 4px 5px 4px auto;
    padding-left: 4px;
    border-left: 1px solid #6d8594;
    box-shadow: inset 1px 0 #b8ccd8;
}

.help button{
    padding-top: 0;
    margin-top: -1px;
}

/* panels */
.workspace{
    flex: 1;
    min-height: 0;
    display: flex;
    padding: 1px 2px 0;
}

.folders{
    flex: 0 1 568px;
    min-width: 0;
    display: flex;
    flex-direction: column;
    margin-right: 4px;
}

.list{
    flex: 1;
    min-width: 0;
    display: flex;
    flex-direction: column;
}

.panel-title{
    flex: none;
    height: 18px;
    display: flex;
    align-items: center;
    gap: 1px;
    padding: 0 2px;
    border: 1px solid #435865;
}

.panel-title h2{
    flex: 1;
    font-size: 11px;
    font-weight: 400;
}

.panel-title button{
    width: 13px;
    height: 16px;
    display: flex;
    align-items: center;
    justify-content: center;
}

.dark{
    background: #0f2836;
    border-color: #0f2836;
    color: #fff;
}

.tri{
    width: 5px;
    height: 8px;
}

.pin{
    width: 9px;
    height: 11px;
}

.cross{
    width: 9px;
    height: 9px;
}

/* folder tree */
.tree{
    flex: 1;
    min-height: 0;
    display: flex;
    margin-top: 2px;
    background: #fff;
}

.tree-view{
    flex: 1;
    min-width: 0;
    overflow: hidden;
}

table{
    table-layout: fixed;
    border-collapse: separate;
    border-spacing: 0;
}

th{
    height: 19px;
    background: linear-gradient(to bottom, #78909f, #78909f 80%, #5f7684);
    box-shadow: inset 1px 0 #a6bcc9, inset 0 1px #5f7684;
    font-weight: 400;
    line-height: 18px;
    text-align: center;
    vertical-align: middle;
}

.tree-table{
    width: 100%;
}

.w-rate{
    width: 90px;
}

.w-mark{
    width: 30px;
}

th .icon{
    display: block;
    margin: 0 auto;
}

.sort-mark{
    display: block;
    padding-right: 6px;
    text-align: right;
    color: #c8d8e0;
}

.tree-table td{
    height: 19px;
}

.node{
    height: 19px;
    display: flex;
    align-items: center;
    overflow: hidden;
    white-space: nowrap;
}

.guide, .node-icon{
    flex: none;
    width: 19px;
    height: 19px;
    display: flex;
    align-items: center;
    justify-content: center;
}

.line{
    background: repeating-linear-gradient(to bottom, #a0a0a0 0 1px, transparent 1px 2px) 9px 0 / 1px 100% no-repeat;
}

.joint{
    background: repeating-linear-gradient(to bottom, #a0a0a0 0 1px, transparent 1px 2px) 9px 0 / 1px 100% no-repeat, repeating-linear-gradient(to right, #a0a0a0 0 1px, transparent 1px 2px) 100% 9px / 10px 1px no-repeat;
}

.joint.last{
    background-size: 1px 50%, 10px 1px;
}

.open{
    background: repeating-linear-gradient(to bottom, #a0a0a0 0 1px, transparent 1px 2px) 9px 100% / 1px 50% no-repeat;
}

.expander{
    flex: none;
    width: 11px;
    height: 11px;
    border: 1px solid #7088a8;
    border-radius: 1px;
    background: linear-gradient(#1c2c50, #1c2c50) 2px 4px / 5px 1px no-repeat, linear-gradient(135deg, #fff, #b8c4e0);
}

.plus{
    background: linear-gradient(#1c2c50, #1c2c50) 2px 4px / 5px 1px no-repeat, linear-gradient(#1c2c50, #1c2c50) 4px 2px / 1px 5px no-repeat, linear-gradient(135deg, #fff, #b8c4e0);
}

.node-name{
    flex: 1;
    min-width: 0;
    height: 19px;
    padding-left: 1px;
    overflow: hidden;
    line-height: 17px;
}

.selected .node-name{
    background: #bbddff;
}

.stars{
    display: flex;
    gap: 2px;
    padding: 1px 0 0 6px;
}

.stars svg{
    width: 14px;
    height: 14px;
}

.sort{
    display: block;
    width: 15px;
    height: 15px;
    margin-left: 8px;
}

.faded{
    opacity: 0.3;
}

/* scrollbars */
.scroll-v{
    flex: none;
    width: 17px;
    display: flex;
    flex-direction: column;
    align-items: center;
    padding: 6px 0;
    background: linear-gradient(to right, #e6e6e6, #f4f4f4);
    color: #404040;
}

.tri-v{
    width: 8px;
    height: 5px;
    flex: none;
}

.track-v{
    flex: 1;
    align-self: stretch;
    display: flex;
    flex-direction: column;
}

.space-top{
    flex: 246;
}

.thumb-v{
    flex: 231;
    display: flex;
    align-items: center;
    justify-content: center;
    margin: 0 1px;
    border: 1px solid #979797;
    border-radius: 2px;
    background: linear-gradient(to right, #f4f4f4, #e6e6e8 50%, #cfcfd4 50%, #dcdce0);
}

.thumb-v i{
    width: 7px;
    height: 9px;
    background: repeating-linear-gradient(to bottom, #707070 0 1px, #f0f0f0 1px 3px);
}

.space-bottom{
    flex: 207;
}

.scroll-h{
    flex: none;
    height: 19px;
    display: flex;
    align-items: center;
    gap: 5px;
    padding-right: 6px;
    background: #ececec;
    color: #303030;
}

.navigator{
    align-self: stretch;
    display: flex;
    background: #8ea6b4;
}

.navigator button{
    width: 17px;
    display: flex;
    align-items: center;
    justify-content: center;
    border-right: 1px solid #c0d2dc;
    background: #8ba3b2;
    color: #000;
}

.navigator button:disabled{
    border-right-color: #8ea6b4;
    background: #8ea6b4;
    color: #445763;
}

.navigator svg{
    width: 11px;
    height: 9px;
}

.track-h{
    flex: 1;
    align-self: stretch;
    padding: 1px 3px;
}

.thumb-h{
    width: 18%;
    height: 17px;
    display: flex;
    align-items: center;
    justify-content: center;
    border: 1px solid #979797;
    border-radius: 2px;
    background: linear-gradient(to bottom, #f6f6f6, #e6e6e8 50%, #cfcfd4 50%, #dcdce0);
}

.thumb-h i{
    width: 9px;
    height: 7px;
    background: repeating-linear-gradient(to right, #707070 0 1px, #f0f0f0 1px 3px);
}

/* small toolbars and tabs */
.small-tools{
    flex: none;
    height: 25px;
    display: flex;
    align-items: center;
    gap: 5px;
    padding-bottom: 2px;
    background: linear-gradient(to bottom, #a6bdcb, #75899a);
}

.small-tools button{
    width: 25px;
    height: 22px;
    display: flex;
    align-items: center;
    justify-content: center;
}

.list-tools{
    height: 27px;
    padding: 0 5px 2px;
}

.bottom-tabs{
    flex: none;
    height: 24px;
    display: flex;
    align-items: flex-start;
    margin-top: 2px;
    border-top: 1px solid #2f4654;
    background: linear-gradient(to bottom, #a9c0ce, #75899a);
}

.bottom-tabs button{
    height: 20px;
    padding: 0 6px 2px 4px;
    white-space: nowrap;
}

.bottom-tabs button:first-child{
    padding-left: 10px;
    border-right: 1px solid #d4e2ea;
}

.bottom-tabs .active{
    border: 1px solid #2f4654;
    border-top: none;
    background: #8fa6b4;
}

.view-tabs{
    flex: none;
    height: 23px;
    display: flex;
    align-items: flex-end;
    margin-top: 2px;
    padding-left: 5px;
    border-bottom: 1px solid #1d3542;
    background: linear-gradient(to bottom, #94abb9, #60788a);
}

.view-tabs button{
    height: 18px;
    padding: 0 5px 0 4px;
    background: #8299a7;
}

.view-tabs .active{
    height: 20px;
    margin-bottom: -1px;
    border: 1px solid #1d3542;
    border-bottom: none;
    background: #78909f;
}

/* file list */
.grid-view{
    flex: 1;
    min-height: 0;
    margin-top: 2px;
    overflow: hidden;
    background: #fff;
}

.grid-table{
    width: calc(100% + 115px);
}

.grid-table th{
    height: 18px;
}

.w-genre{
    width: 110px;
}

.w-year{
    width: 74px;
}

.w-score{
    width: 90px;
}

.w-path{
    width: 297px;
}

.grid-table td{
    height: 20px;
    border-right: 1px solid #4c6573;
    border-bottom: 1px solid #4c6573;
    white-space: nowrap;
}

.grid-table td:last-child{
    padding: 0 0 2px 1px;
}

.grid-table tr:nth-child(even) td{
    background: #c0d8e6;
}

.file{
    height: 19px;
    display: flex;
    align-items: center;
    padding-left: 4px;
    overflow: hidden;
}

.file span{
    min-width: 0;
    padding-bottom: 2px;
    overflow: hidden;
    white-space: pre;
}

.film{
    flex: none;
    width: 14px;
    height: 15px;
    margin: 0 4px 1px 6px;
}

/* script buttons */
.scripts{
    flex: 0 0 185px;
    margin-left: 2px;
    display: flex;
    flex-direction: column;
    padding: 4px 5px 0;
    border-radius: 4px 4px 0 0;
    background: linear-gradient(to right, #aec6d4, #9db4c2 50%, #73899a);
    font-family: "Roboto", sans-serif;
    font-size: 12px;
}

.scripts::before{
    content: "";
    border-top: 2px dotted #2f4350;
}

.scripts button{
    height: 75px;
    display: flex;
    flex-direction: column;
    align-items: center;
    gap: 2px;
    padding-top: 6px;
    border-bottom: 1px solid #6d8594;
    box-shadow: 0 1px #bccfda;
    white-space: nowrap;
}

.scripts button:last-child{
    border-bottom: none;
    box-shadow: none;
}

.scripts svg{
    flex: none;
    width: 44px;
    height: 46px;
}

/* status bar */
.status-bar{
    flex: none;
    height: 20px;
    display: flex;
    gap: 2px;
    padding: 1px 0 0 2px;
    border-top: 1px solid #b8ccd8;
    border-bottom: 2px solid #34507c;
    background: #a3bac8;
}

.cell{
    display: flex;
    align-items: center;
    justify-content: center;
    padding-bottom: 1px;
    border: 1px solid #6a8291;
    border-bottom: none;
    background: linear-gradient(to bottom, #a9c0ce, #93aab8);
}

.message{
    flex: 1;
}

.tiny{
    width: 22px;
}

.wheel{
    width: 14px;
    height: 14px;
    border-radius: 50%;
    background: radial-gradient(circle, #fff 1px, transparent 5px), conic-gradient(red, magenta, blue, cyan, lime, yellow, red);
}

.swatches{
    width: 118px;
    gap: 3px;
}

.swatches i{
    width: 14px;
    height: 11px;
    background: #000;
}

.swatches .black:not(:last-child){
    margin-right: 4px;
}

.swatches .grey{
    border: 1px solid #b8ccd8;
    background: #8ea5b3;
}

.swatches .white{
    background: #fff;
}

.swatches .blue{
    background: #c0d8e8;
}

.number{
    width: 102px;
}

.device{
    width: 43px;
    gap: 4px;
}

.device input{
    appearance: none;
    width: 13px;
    height: 13px;
    border: 1px solid #405868;
    background: #fff;
}

.empty{
    width: 32px;
}

.version{
    width: 171px;
}
```
